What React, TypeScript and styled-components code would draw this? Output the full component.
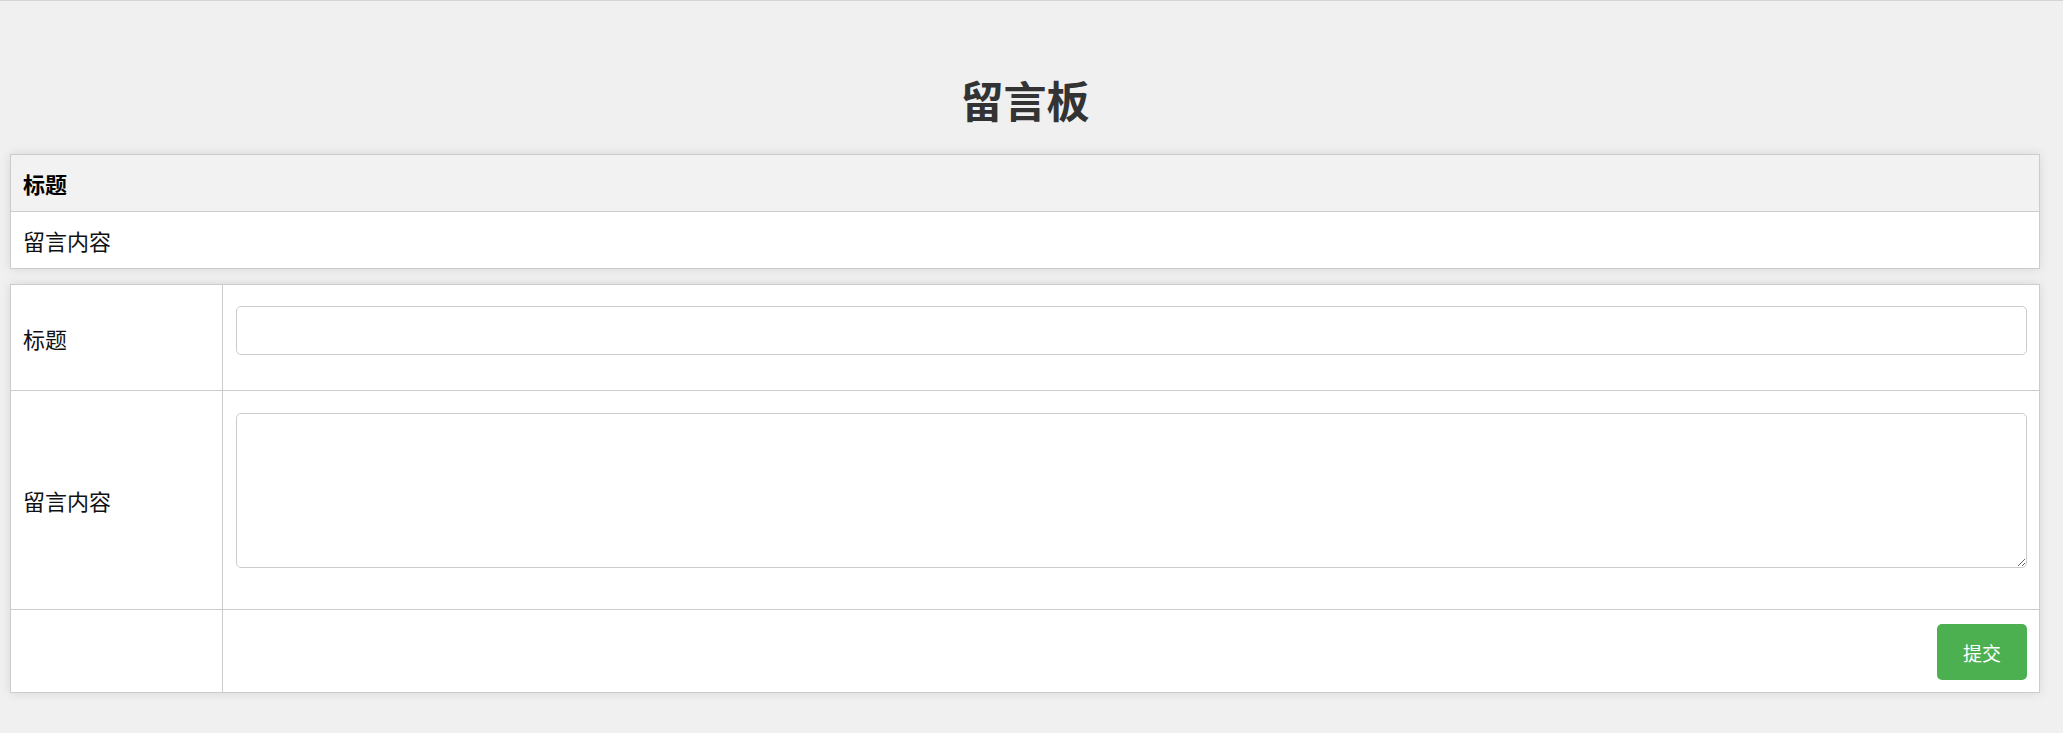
import React, { useState } from 'react';
import styled, { createGlobalStyle } from 'styled-components';

const GlobalStyle = createGlobalStyle`
  html, body {
    margin: 0;
    padding: 0;
    background-color: #f0f0f0;
  }
  body {
    font-family: 'Noto Sans CJK SC', 'Noto Sans', sans-serif;
    color: #333333;
  }
`;

const Page = styled.div`
  border-top: 1px solid #d4d4d4;
  padding: 0 23px 0 10px;
  min-height: 732px;
`;

const Title = styled.h1`
  margin: 68px 0 25px 0;
  font-size: 43px;
  line-height: 60px;
  font-weight: 700;
  text-align: center;
  color: #333333;
`;

const Table = styled.table`
  width: 100%;
  border-collapse: collapse;
  background-color: #ffffff;
  box-shadow: 0 0 10px rgba(0, 0, 0, 0.1);
  margin-bottom: 15px;
`;

const HeadCell = styled.th`
  background-color: #f2f2f2;
  border: 1px solid #cccccc;
  padding: 12px;
  font-size: 22px;
  line-height: 32px;
  font-weight: 700;
  text-align: left;
  color: #000000;
`;

const Cell = styled.td`
  border: 1px solid #cccccc;
  padding: 12px;
  font-size: 22px;
  line-height: 32px;
  color: #111111;
  vertical-align: middle;
`;

const LabelCell = styled(Cell)`
  width: 187px;
`;

const FieldCell = styled(Cell)`
  padding: 12px 12px 12px 13px;
`;

const ActionCell = styled(Cell)`
  text-align: right;
  padding: 13px 12px 12px 13px;
`;

const TextInput = styled.input`
  display: block;
  box-sizing: border-box;
  width: 100%;
  height: 49px;
  margin: 9px 0 23px 0;
  padding: 0 12px;
  border: 1px solid #cccccc;
  border-radius: 5px;
  font-family: inherit;
  font-size: 18px;
  outline: none;
`;

const TextArea = styled.textarea`
  display: block;
  box-sizing: border-box;
  width: 100%;
  height: 155px;
  margin: 10px 0 29px 0;
  padding: 8px 12px;
  border: 1px solid #cccccc;
  border-radius: 5px;
  font-family: inherit;
  font-size: 18px;
  outline: none;
`;

const SubmitButton = styled.button`
  display: inline-block;
  width: 90px;
  height: 56px;
  margin: 1px 0 0 0;
  border: none;
  border-radius: 5px;
  background-color: #4caf50;
  color: #ffffff;
  font-family: 'Noto Sans CJK SC', 'Noto Sans', sans-serif;
  font-size: 19px;
  cursor: pointer;
  vertical-align: top;
`;

interface Message {
  title: string;
  content: string;
}

const App: React.FC = () => {
  const [messages] = useState<Message[]>([{ title: '标题', content: '留言内容' }]);
  const [title, setTitle] = useState('');
  const [content, setContent] = useState('');

  return (
    <>
      <GlobalStyle />
      <Page>
        <Title>留言板</Title>

        {messages.map((m, i) => (
          <Table key={i}>
            <thead>
              <tr>
                <HeadCell>{m.title}</HeadCell>
              </tr>
            </thead>
            <tbody>
              <tr>
                <Cell>{m.content}</Cell>
              </tr>
            </tbody>
          </Table>
        ))}

        <Table>
          <tbody>
            <tr>
              <LabelCell>标题</LabelCell>
              <FieldCell>
                <TextInput value={title} onChange={(e) => setTitle(e.target.value)} />
              </FieldCell>
            </tr>
            <tr>
              <LabelCell>留言内容</LabelCell>
              <FieldCell>
                <TextArea value={content} onChange={(e) => setContent(e.target.value)} />
              </FieldCell>
            </tr>
            <tr>
              <LabelCell />
              <ActionCell>
                <SubmitButton type="button">提交</SubmitButton>
              </ActionCell>
            </tr>
          </tbody>
        </Table>
      </Page>
    </>
  );
};

export default App;
